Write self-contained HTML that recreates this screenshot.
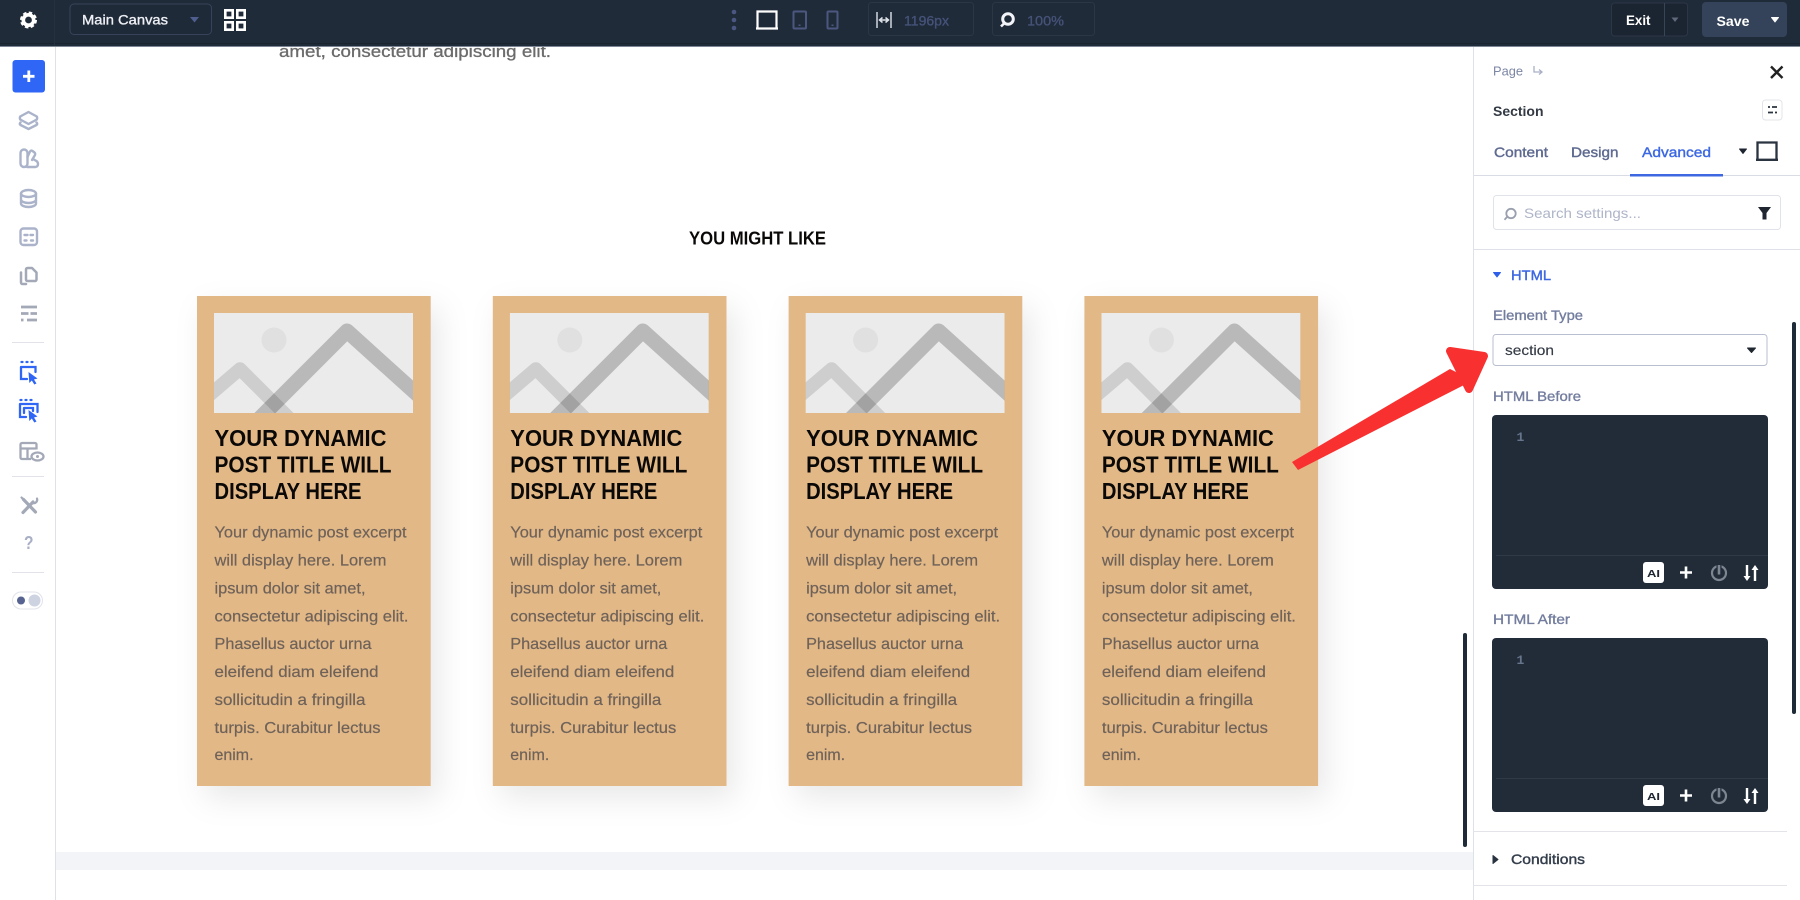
<!DOCTYPE html>
<html lang="en">
<head>
<meta charset="utf-8">
<title>Section Advanced Settings</title>
<style>
html,body{margin:0;padding:0;width:1800px;height:900px;overflow:hidden;background:#fff}
svg{display:block;position:absolute;left:0;top:0}
text{font-family:"Liberation Sans",Arial,sans-serif}
.h{font-weight:700;font-size:23px;fill:#0b0908}
.e{font-size:16px;fill:#6f6259;stroke:#6f6259;stroke-width:.2}
.lab{font-size:14px;fill:#737d9e;stroke:#737d9e;stroke-width:.35}
.tab{font-size:14px;fill:#5e6a90;stroke:#5e6a90;stroke-width:.4}
.dim{font-size:14px;fill:#46537a;stroke:#46537a;stroke-width:.3}
</style>
</head>
<body>
<svg width="1800" height="900" viewBox="0 0 1800 900" xmlns="http://www.w3.org/2000/svg">
<defs>
<clipPath id="cp"><rect width="199" height="100"/></clipPath>
<g id="ph" clip-path="url(#cp)">
<rect width="199" height="100" fill="#ebebeb"/>
<circle cx="60" cy="27" r="12.500" fill="#e0e0e0"/>
<path d="M-15 91L26 56L80 110" fill="none" stroke="#000" stroke-opacity=".12" stroke-width="13.500" stroke-linejoin="round"/>
<path d="M23 128L133 18L215 92" fill="none" stroke="#000" stroke-opacity=".21" stroke-width="15" stroke-linejoin="round"/>
</g>
<g id="pw" fill="none">
<rect x="1643" y="562" width="21" height="21" rx="3" fill="#fff"/>
<path d="M1680 572.500h12M1686 566.500v12" stroke="#fff" stroke-width="2.600"/>
<circle cx="1719" cy="573" r="7" stroke="#7c8590" stroke-width="2.200"/>
<path d="M1719 564v9" stroke="#222c39" stroke-width="5"/>
<path d="M1719 565v9.500" stroke="#7c8590" stroke-width="2.600"/>
<path d="M1747 565v14M1755 567v14" stroke="#fff" stroke-width="2.400"/>
<path d="M1743.500 576h7l-3.500 5zM1751.500 570h7l-3.500-5z" fill="#fff"/>
</g>
</defs>

<!-- canvas -->
<rect x="56" y="852" width="1417" height="18" fill="#f3f4f8"/>
<text x="279" y="57" font-size="17" fill="#6b6b6b" stroke="#6b6b6b" stroke-width=".3" textLength="272" lengthAdjust="spacingAndGlyphs">amet, consectetur adipiscing elit.</text>
<text x="689" y="244.500" font-size="18.300" font-weight="700" fill="#0b0908" textLength="137" lengthAdjust="spacingAndGlyphs">YOU MIGHT LIKE</text>

<g>
<rect x="197" y="296" width="233.700" height="490" fill="#e2b887" style="filter:drop-shadow(8px 12px 15px rgba(0,0,0,.09))"/>
<use href="#ph" x="214" y="313"/>
<text class="h" x="214.500" y="446" textLength="172" lengthAdjust="spacingAndGlyphs">YOUR DYNAMIC</text>
<text class="h" x="214.500" y="472.500" textLength="177" lengthAdjust="spacingAndGlyphs">POST TITLE WILL</text>
<text class="h" x="214.500" y="499" textLength="147" lengthAdjust="spacingAndGlyphs">DISPLAY HERE</text>
<text class="e" x="214.500" y="537.500" textLength="192" lengthAdjust="spacingAndGlyphs">Your dynamic post excerpt</text>
<text class="e" x="214.500" y="565.500" textLength="172" lengthAdjust="spacingAndGlyphs">will display here. Lorem</text>
<text class="e" x="214.500" y="593.500" textLength="151" lengthAdjust="spacingAndGlyphs">ipsum dolor sit amet,</text>
<text class="e" x="214.500" y="621.500" textLength="194" lengthAdjust="spacingAndGlyphs">consectetur adipiscing elit.</text>
<text class="e" x="214.500" y="649" textLength="157" lengthAdjust="spacingAndGlyphs">Phasellus auctor urna</text>
<text class="e" x="214.500" y="677" textLength="164" lengthAdjust="spacingAndGlyphs">eleifend diam eleifend</text>
<text class="e" x="214.500" y="705" textLength="151" lengthAdjust="spacingAndGlyphs">sollicitudin a fringilla</text>
<text class="e" x="214.500" y="733" textLength="166" lengthAdjust="spacingAndGlyphs">turpis. Curabitur lectus</text>
<text class="e" x="214.500" y="760" textLength="39" lengthAdjust="spacingAndGlyphs">enim.</text>
</g>
<g transform="translate(295.800,0)">
<rect x="197" y="296" width="233.700" height="490" fill="#e2b887" style="filter:drop-shadow(8px 12px 15px rgba(0,0,0,.09))"/>
<use href="#ph" x="214" y="313"/>
<text class="h" x="214.500" y="446" textLength="172" lengthAdjust="spacingAndGlyphs">YOUR DYNAMIC</text>
<text class="h" x="214.500" y="472.500" textLength="177" lengthAdjust="spacingAndGlyphs">POST TITLE WILL</text>
<text class="h" x="214.500" y="499" textLength="147" lengthAdjust="spacingAndGlyphs">DISPLAY HERE</text>
<text class="e" x="214.500" y="537.500" textLength="192" lengthAdjust="spacingAndGlyphs">Your dynamic post excerpt</text>
<text class="e" x="214.500" y="565.500" textLength="172" lengthAdjust="spacingAndGlyphs">will display here. Lorem</text>
<text class="e" x="214.500" y="593.500" textLength="151" lengthAdjust="spacingAndGlyphs">ipsum dolor sit amet,</text>
<text class="e" x="214.500" y="621.500" textLength="194" lengthAdjust="spacingAndGlyphs">consectetur adipiscing elit.</text>
<text class="e" x="214.500" y="649" textLength="157" lengthAdjust="spacingAndGlyphs">Phasellus auctor urna</text>
<text class="e" x="214.500" y="677" textLength="164" lengthAdjust="spacingAndGlyphs">eleifend diam eleifend</text>
<text class="e" x="214.500" y="705" textLength="151" lengthAdjust="spacingAndGlyphs">sollicitudin a fringilla</text>
<text class="e" x="214.500" y="733" textLength="166" lengthAdjust="spacingAndGlyphs">turpis. Curabitur lectus</text>
<text class="e" x="214.500" y="760" textLength="39" lengthAdjust="spacingAndGlyphs">enim.</text>
</g>
<g transform="translate(591.600,0)">
<rect x="197" y="296" width="233.700" height="490" fill="#e2b887" style="filter:drop-shadow(8px 12px 15px rgba(0,0,0,.09))"/>
<use href="#ph" x="214" y="313"/>
<text class="h" x="214.500" y="446" textLength="172" lengthAdjust="spacingAndGlyphs">YOUR DYNAMIC</text>
<text class="h" x="214.500" y="472.500" textLength="177" lengthAdjust="spacingAndGlyphs">POST TITLE WILL</text>
<text class="h" x="214.500" y="499" textLength="147" lengthAdjust="spacingAndGlyphs">DISPLAY HERE</text>
<text class="e" x="214.500" y="537.500" textLength="192" lengthAdjust="spacingAndGlyphs">Your dynamic post excerpt</text>
<text class="e" x="214.500" y="565.500" textLength="172" lengthAdjust="spacingAndGlyphs">will display here. Lorem</text>
<text class="e" x="214.500" y="593.500" textLength="151" lengthAdjust="spacingAndGlyphs">ipsum dolor sit amet,</text>
<text class="e" x="214.500" y="621.500" textLength="194" lengthAdjust="spacingAndGlyphs">consectetur adipiscing elit.</text>
<text class="e" x="214.500" y="649" textLength="157" lengthAdjust="spacingAndGlyphs">Phasellus auctor urna</text>
<text class="e" x="214.500" y="677" textLength="164" lengthAdjust="spacingAndGlyphs">eleifend diam eleifend</text>
<text class="e" x="214.500" y="705" textLength="151" lengthAdjust="spacingAndGlyphs">sollicitudin a fringilla</text>
<text class="e" x="214.500" y="733" textLength="166" lengthAdjust="spacingAndGlyphs">turpis. Curabitur lectus</text>
<text class="e" x="214.500" y="760" textLength="39" lengthAdjust="spacingAndGlyphs">enim.</text>
</g>
<g transform="translate(887.400,0)">
<rect x="197" y="296" width="233.700" height="490" fill="#e2b887" style="filter:drop-shadow(8px 12px 15px rgba(0,0,0,.09))"/>
<use href="#ph" x="214" y="313"/>
<text class="h" x="214.500" y="446" textLength="172" lengthAdjust="spacingAndGlyphs">YOUR DYNAMIC</text>
<text class="h" x="214.500" y="472.500" textLength="177" lengthAdjust="spacingAndGlyphs">POST TITLE WILL</text>
<text class="h" x="214.500" y="499" textLength="147" lengthAdjust="spacingAndGlyphs">DISPLAY HERE</text>
<text class="e" x="214.500" y="537.500" textLength="192" lengthAdjust="spacingAndGlyphs">Your dynamic post excerpt</text>
<text class="e" x="214.500" y="565.500" textLength="172" lengthAdjust="spacingAndGlyphs">will display here. Lorem</text>
<text class="e" x="214.500" y="593.500" textLength="151" lengthAdjust="spacingAndGlyphs">ipsum dolor sit amet,</text>
<text class="e" x="214.500" y="621.500" textLength="194" lengthAdjust="spacingAndGlyphs">consectetur adipiscing elit.</text>
<text class="e" x="214.500" y="649" textLength="157" lengthAdjust="spacingAndGlyphs">Phasellus auctor urna</text>
<text class="e" x="214.500" y="677" textLength="164" lengthAdjust="spacingAndGlyphs">eleifend diam eleifend</text>
<text class="e" x="214.500" y="705" textLength="151" lengthAdjust="spacingAndGlyphs">sollicitudin a fringilla</text>
<text class="e" x="214.500" y="733" textLength="166" lengthAdjust="spacingAndGlyphs">turpis. Curabitur lectus</text>
<text class="e" x="214.500" y="760" textLength="39" lengthAdjust="spacingAndGlyphs">enim.</text>
</g>

<!-- canvas scrollbar -->
<rect x="1463" y="633" width="4" height="214" rx="2" fill="#1f2a38"/>

<!-- left sidebar -->
<rect x="0" y="47" width="55" height="853" fill="#fff"/>
<rect x="55" y="47" width="1" height="853" fill="#dfe1e8"/>
<rect x="12.500" y="60" width="32.500" height="32.500" rx="3" fill="#2f66f6"/>
<path d="M23 76.300h11.500M28.800 70.500v11.500" stroke="#fff" stroke-width="2.800"/>
<g fill="none" stroke="#aab3ca" stroke-width="2.400" stroke-linejoin="round" stroke-linecap="round">
<path d="M28.500 112L36.800 116.500Q37.500 118 36.800 119.500L28.500 124L20.200 119.500Q19.500 118 20.200 116.500Z"/>
<path d="M20.500 122.500Q19 124 20.500 125L28.500 129L36.500 125Q38 124 36.500 122.500"/>
<path d="M20.500 153a3.500 3.500 0 0 1 7 0v10.500a3.500 3.500 0 0 1-7 0Z"/>
<path d="M27.500 157l2.500-5.500q1-1.500 2.500-.5l2 1.500q1 1 .5 2.500l-3 5"/>
<path d="M27 167h8.500q2.500-.5 2.500-3t-2.500-3.500l-2.500-1.500"/>
<ellipse cx="28.500" cy="193.500" rx="7.500" ry="3.500"/>
<path d="M21 193.500v10c0 2 3.500 3.500 7.500 3.500s7.500-1.500 7.500-3.500v-10M21 199.500c0 2 3.500 3.500 7.500 3.500s7.500-1.500 7.500-3.500"/>
<rect x="20.500" y="228.500" width="16.500" height="16.500" rx="3"/>
<path d="M24.500 235h3M30.500 235h2.500M24.500 240.500h2M31 240.500h2"/>
</g>
<g fill="none" stroke="#a4a9b8" stroke-width="2.500" stroke-linejoin="round" stroke-linecap="round">
<path d="M27.500 268h4.500l4.500 4.500v7a1.500 1.500 0 0 1-1.500 1.500h-7.500a1.500 1.500 0 0 1-1.500-1.500v-10a1.500 1.500 0 0 1 1.500-1.500Z"/>
<path d="M26 284h-3.500a1.500 1.500 0 0 1-1.500-1.500v-10"/>
</g>
<path d="M21 307h16M21 313.500h7.500M30.500 313.500h6.500M21 320h2.500M27 320h10" fill="none" stroke="#a4a9b8" stroke-width="2.700"/>
<rect x="12" y="342" width="32" height="1" fill="#e1e3e9"/>
<g fill="none" stroke="#2f66f6" stroke-width="2.300" stroke-linecap="round">
<path d="M21.500 362h1M26.500 362h1M31.500 362h1"/>
<path d="M21 367h14.500v5M21 367v12h6"/>
<path d="M20.500 400h1M25.500 400h1M30.500 400h1"/>
<path d="M20 404h17.500v8M20 404v13h6M24 408h9v3M24 408v5"/>
</g>
<path d="M28.500 372l9 6.500-3.500 1 2.500 4-2.200 1-2.500-4-2.500 2.500Z" fill="#2f66f6"/>
<path d="M28.500 410l9 6.500-3.500 1 2.500 4-2.200 1-2.500-4-2.500 2.500Z" fill="#2f66f6"/>
<g fill="none" stroke="#a4a9b8" stroke-width="2.300" stroke-linejoin="round">
<path d="M31 459h-9a1.500 1.500 0 0 1-1.500-1.500v-13a1.500 1.500 0 0 1 1.500-1.500h13a1.500 1.500 0 0 1 1.500 1.500v5M21 448.500h15M27.500 449v10"/>
<ellipse cx="37.500" cy="456.500" rx="6" ry="4"/>
</g>
<circle cx="37.500" cy="456.500" r="1.500" fill="#a4a9b8"/>
<rect x="12" y="476" width="32" height="1" fill="#e1e3e9"/>
<g fill="none" stroke="#a4a9b8" stroke-linecap="round">
<path d="M23.500 499.500L35.500 512" stroke-width="3.200"/>
<path d="M23 512.500L33 502" stroke-width="3.200"/>
<path d="M21.500 497.500l3.500 3.500" stroke-width="2.200"/>
<path d="M37 498.500a3.500 3.500 0 0 1-4.500 4.500" stroke-width="2.200"/>
</g>
<text x="24" y="549" font-size="18" font-weight="700" fill="#a9b0c6" textLength="9.500" lengthAdjust="spacingAndGlyphs">?</text>
<rect x="12" y="572" width="32" height="1" fill="#e1e3e9"/>
<rect x="12.500" y="592" width="30" height="17" rx="8.500" fill="#fff" stroke="#e1e3ea"/>
<circle cx="21" cy="600.500" r="4" fill="#566391"/>
<circle cx="34.500" cy="600.500" r="6" fill="#ced3e2"/>

<!-- right panel -->
<rect x="1473" y="47" width="327" height="853" fill="#fff"/>
<rect x="1473" y="47" width="1" height="853" fill="#dfe1e8"/>
<text x="1493" y="75.500" font-size="12.500" fill="#7c86a5" textLength="30" lengthAdjust="spacingAndGlyphs">Page</text>
<path d="M1534 66v6h7M1539 69.500l3 2.500-3 2.500" fill="none" stroke="#a9b0c6" stroke-width="1.300"/>
<path d="M1771 66.500l11.500 11.500M1782.500 66.500L1771 78" stroke="#222" stroke-width="2.400"/>
<text x="1493" y="116" font-size="14" font-weight="700" fill="#333a44" textLength="50.500" lengthAdjust="spacingAndGlyphs">Section</text>
<rect x="1762.500" y="100" width="19.500" height="20" rx="3" fill="#fff" stroke="#e2e4ea"/>
<path d="M1768 107h2M1772 107h5M1768 112.500h5M1775 112.500h2" stroke="#2a3340" stroke-width="1.800"/>
<text class="tab" x="1494" y="157" textLength="54" lengthAdjust="spacingAndGlyphs">Content</text>
<text class="tab" x="1571" y="157" textLength="47.500" lengthAdjust="spacingAndGlyphs">Design</text>
<text x="1642" y="157" font-size="14" fill="#3d68e2" stroke="#3d68e2" stroke-width=".4" textLength="69" lengthAdjust="spacingAndGlyphs">Advanced</text>
<path d="M1739.500 149h7l-3.500 4.500z" fill="#1d2530" stroke="#1d2530" stroke-linejoin="round"/>
<path d="M1757.500 159.500v-17h19v17M1756 159.800h22" fill="none" stroke="#2a3340" stroke-width="2.300"/>
<rect x="1474" y="175" width="326" height="1" fill="#d9dce5"/>
<rect x="1630" y="174" width="93" height="2.500" fill="#3d68e2"/>
<rect x="1493.500" y="195.500" width="287" height="34" rx="3" fill="#fff" stroke="#e0e3ea"/>
<circle cx="1511" cy="213.500" r="4.700" fill="none" stroke="#9aa0ae" stroke-width="1.800"/>
<path d="M1507 217l-2.500 2.800" stroke="#9aa0ae" stroke-width="1.800"/>
<text x="1524" y="218" font-size="14" fill="#aeb5c8" textLength="117" lengthAdjust="spacingAndGlyphs">Search settings...</text>
<path d="M1758 207h13l-4.500 6v6.500h-4v-6.500z" fill="#1f2630"/>
<rect x="1474" y="249" width="326" height="1" fill="#dfe1e8"/>

<path d="M1493.500 272.500h7l-3.500 4.500z" fill="#2f5fe8" stroke="#2f5fe8" stroke-linejoin="round"/>
<text x="1511" y="280" font-size="14" fill="#3d68e2" stroke="#3d68e2" stroke-width=".4" textLength="40" lengthAdjust="spacingAndGlyphs">HTML</text>
<text class="lab" x="1493" y="320" textLength="90" lengthAdjust="spacingAndGlyphs">Element Type</text>
<rect x="1493" y="334.500" width="274" height="31" rx="3" fill="#fff" stroke="#b9bfd0"/>
<text x="1505" y="355" font-size="14" fill="#333a44" stroke="#333a44" stroke-width=".15" textLength="49" lengthAdjust="spacingAndGlyphs">section</text>
<path d="M1747.500 348h8l-4 4.500z" fill="#1f2630" stroke="#1f2630" stroke-linejoin="round"/>
<text class="lab" x="1493" y="401" textLength="88" lengthAdjust="spacingAndGlyphs">HTML Before</text>
<rect x="1492" y="415" width="276" height="174" rx="4" fill="#222c39"/>
<rect x="1496" y="555" width="272" height="1" fill="#2f3a49"/>
<text x="1516.500" y="441" font-size="13" font-weight="700" fill="#66748c" style="font-family:'Liberation Mono',monospace">1</text>
<use href="#pw"/>
<text x="1647" y="577" font-size="10.500" font-weight="700" fill="#1d2530" textLength="13" lengthAdjust="spacingAndGlyphs">AI</text>

<text class="lab" x="1493" y="624" textLength="77" lengthAdjust="spacingAndGlyphs">HTML After</text>
<rect x="1492" y="638" width="276" height="174" rx="4" fill="#222c39"/>
<rect x="1496" y="778" width="272" height="1" fill="#2f3a49"/>
<text x="1516.500" y="664" font-size="13" font-weight="700" fill="#66748c" style="font-family:'Liberation Mono',monospace">1</text>
<use href="#pw" y="223"/>
<text x="1647" y="800" font-size="10.500" font-weight="700" fill="#1d2530" textLength="13" lengthAdjust="spacingAndGlyphs">AI</text>

<rect x="1473" y="831" width="314" height="1" fill="#e2e4ea"/>
<path d="M1493 855.500v8l5-4z" fill="#2a3340" stroke="#2a3340" stroke-linejoin="round"/>
<text x="1511" y="864" font-size="14" fill="#333d4b" stroke="#333d4b" stroke-width=".4" textLength="74" lengthAdjust="spacingAndGlyphs">Conditions</text>
<rect x="1473" y="885" width="314" height="1" fill="#e2e4ea"/>
<rect x="1792" y="322" width="4" height="392" rx="2" fill="#1f2a38"/>

<!-- red arrow -->
<path d="M1292 462L1450 369L1462 375L1464 385L1298 470Z" fill="#f93030"/>
<path d="M1450 351L1484 356L1469 389Z" fill="#f93030" stroke="#f93030" stroke-width="8" stroke-linejoin="round"/>

<!-- top bar -->
<rect x="0" y="0" width="1800" height="47" fill="#202b39"/>
<rect x="0" y="43" width="1800" height="1" fill="#1a2330"/>
<rect x="0" y="46" width="1800" height="1" fill="#7d8794"/>
<rect x="54" y="0" width="1" height="46" fill="#263140"/>
<g>
<circle cx="28.500" cy="20" r="5.200" fill="none" stroke="#fff" stroke-width="3.600"/>
<circle cx="28.500" cy="20" r="7" fill="none" stroke="#fff" stroke-width="3" stroke-dasharray="3.300 2.200"/>
</g>
<rect x="70" y="4" width="141.500" height="30.500" rx="4" fill="#1f2a38" stroke="#37435a"/>
<text x="82" y="24.500" font-size="14" fill="#eef0f5" stroke="#eef0f5" stroke-width=".35" textLength="86" lengthAdjust="spacingAndGlyphs">Main Canvas</text>
<path d="M190 17h9l-4.500 5.500z" fill="#4f5e8e"/>
<g fill="none" stroke="#fff" stroke-width="2.600">
<rect x="225.300" y="10.300" width="7.400" height="7.400"/>
<rect x="237.300" y="10.300" width="7.400" height="7.400"/>
<rect x="225.300" y="22.300" width="7.400" height="7.400"/>
<rect x="237.300" y="22.300" width="7.400" height="7.400"/>
</g>
<g fill="#4b5780">
<circle cx="734" cy="12" r="2.300"/><circle cx="734" cy="20" r="2.300"/><circle cx="734" cy="28" r="2.300"/>
</g>
<path d="M757.500 28.500v-17h19v17M756 28.500h22" fill="none" stroke="#fff" stroke-width="2.200"/>
<rect x="793.500" y="11.500" width="12.500" height="17" rx="1" fill="none" stroke="#4b5780" stroke-width="2"/>
<rect x="798.500" y="24.500" width="2" height="1.500" fill="#4b5780"/>
<rect x="827.500" y="11.500" width="10" height="17" rx="1" fill="none" stroke="#4b5780" stroke-width="2"/>
<rect x="831.500" y="24.500" width="2" height="1.500" fill="#4b5780"/>
<rect x="868.500" y="2.500" width="105" height="33" rx="3" fill="none" stroke="#2b3647"/>
<path d="M877 12v16M891 12v16" stroke="#dfe3ea" stroke-width="1.400"/>
<path d="M880 20h8M882.500 17.500L879.500 20l3 2.500M885.500 17.500l3 2.500-3 2.500" fill="none" stroke="#dfe3ea" stroke-width="1.500"/>
<text class="dim" x="904" y="25.500" textLength="45" lengthAdjust="spacingAndGlyphs">1196px</text>
<rect x="992.500" y="2.500" width="102" height="33" rx="3" fill="none" stroke="#2b3647"/>
<circle cx="1008" cy="19" r="5.300" fill="none" stroke="#f2f4f7" stroke-width="3"/>
<path d="M1004 23.500l-3 3" stroke="#f2f4f7" stroke-width="2.600"/>
<text class="dim" x="1027" y="25.500" textLength="37" lengthAdjust="spacingAndGlyphs">100%</text>
<rect x="1611.500" y="3" width="76" height="33" rx="3" fill="#1b2431" stroke="#2b3647"/>
<rect x="1664" y="3" width="1" height="33" fill="#394557"/>
<text x="1626" y="25" font-size="14" font-weight="700" fill="#fff" textLength="24.500" lengthAdjust="spacingAndGlyphs">Exit</text>
<path d="M1671.500 17.500h7l-3.500 4.500z" fill="#5f697b"/>
<rect x="1702" y="2" width="85" height="35" rx="4" fill="#344359"/>
<text x="1716.500" y="26" font-size="14" font-weight="700" fill="#fff" textLength="33" lengthAdjust="spacingAndGlyphs">Save</text>
<path d="M1771.500 17.500h7l-3.500 4.500z" fill="#fff" stroke="#fff" stroke-linejoin="round"/>
</svg>
</body>
</html>
